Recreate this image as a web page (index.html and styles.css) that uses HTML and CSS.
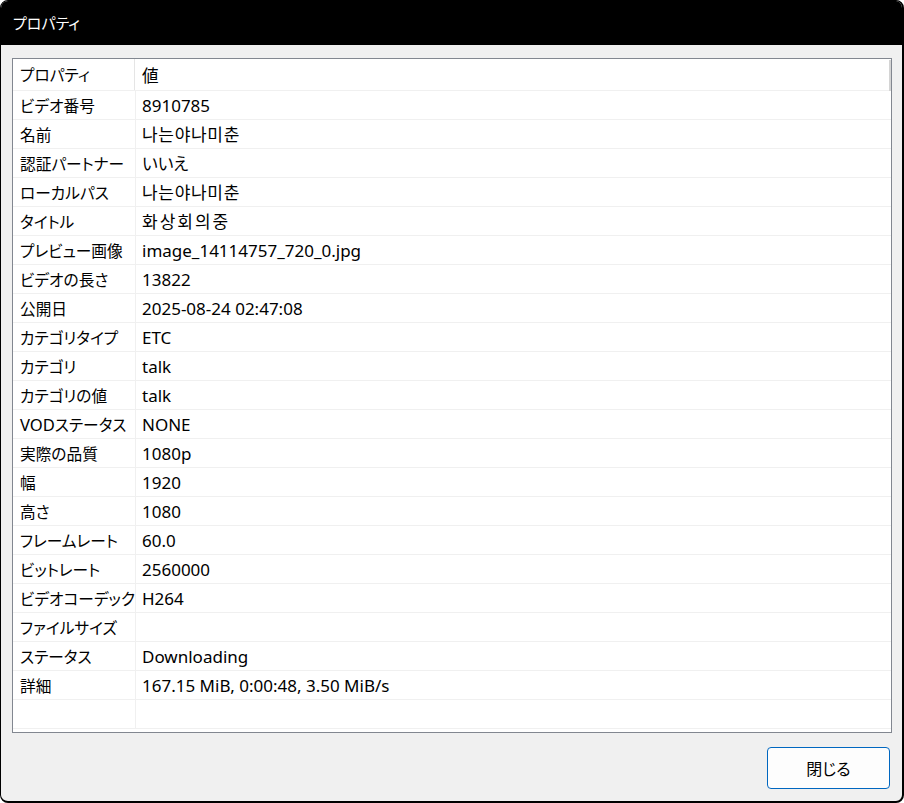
FILE: index.html
```html
<!DOCTYPE html>
<html lang="ja">
<head>
<meta charset="utf-8">
<title>プロパティ</title>
<link rel="stylesheet" href="styles.css">
</head>
<body>
<div class="window">
  <div class="titlebar">プロパティ</div>
  <div class="content">
    <div class="grid-panel">
      <div class="row header">
        <div class="cell key">プロパティ</div>
        <div class="cell val jp">値</div>
      </div>
      <div class="row"><div class="cell key">ビデオ番号</div><div class="cell val">8910785</div></div>
      <div class="row"><div class="cell key">名前</div><div class="cell val ko">나는야나미춘</div></div>
      <div class="row"><div class="cell key">認証パートナー</div><div class="cell val jp">いいえ</div></div>
      <div class="row"><div class="cell key">ローカルパス</div><div class="cell val ko">나는야나미춘</div></div>
      <div class="row"><div class="cell key">タイトル</div><div class="cell val ko wide">화상회의중</div></div>
      <div class="row"><div class="cell key">プレビュー画像</div><div class="cell val">image_14114757_720_0.jpg</div></div>
      <div class="row"><div class="cell key">ビデオの長さ</div><div class="cell val">13822</div></div>
      <div class="row"><div class="cell key">公開日</div><div class="cell val">2025-08-24 02:47:08</div></div>
      <div class="row"><div class="cell key">カテゴリタイプ</div><div class="cell val">ETC</div></div>
      <div class="row"><div class="cell key">カテゴリ</div><div class="cell val">talk</div></div>
      <div class="row"><div class="cell key">カテゴリの値</div><div class="cell val">talk</div></div>
      <div class="row"><div class="cell key"><span class="latin">VOD</span>ステータス</div><div class="cell val">NONE</div></div>
      <div class="row"><div class="cell key">実際の品質</div><div class="cell val">1080p</div></div>
      <div class="row"><div class="cell key">幅</div><div class="cell val">1920</div></div>
      <div class="row"><div class="cell key">高さ</div><div class="cell val">1080</div></div>
      <div class="row"><div class="cell key">フレームレート</div><div class="cell val">60.0</div></div>
      <div class="row"><div class="cell key">ビットレート</div><div class="cell val">2560000</div></div>
      <div class="row"><div class="cell key">ビデオコーデック</div><div class="cell val">H264</div></div>
      <div class="row"><div class="cell key">ファイルサイズ</div><div class="cell val"></div></div>
      <div class="row"><div class="cell key">ステータス</div><div class="cell val">Downloading</div></div>
      <div class="row"><div class="cell key">詳細</div><div class="cell val">167.15 MiB, 0:00:48, 3.50 MiB/s</div></div>
      <div class="row"><div class="cell key"></div><div class="cell val"></div></div>
      <div class="scroll-thumb"></div>
    </div>
    <div class="actions">
      <button class="btn">閉じる</button>
    </div>
  </div>
</div>
</body>
</html>
```

FILE: styles.css
```css
* { box-sizing: border-box; }
html, body {
  margin: 0;
  padding: 0;
  background: #ffffff;
}
body {
  font-family: "Noto Sans", "Noto Sans CJK JP", sans-serif;
  font-feature-settings: "palt";
  color: #000;
}
.window {
  width: 904px;
  height: 803px;
  background: #f0f0f0;
  border: 1px solid #000;
  border-right-width: 2px;
  border-bottom-width: 2px;
  border-radius: 8px;
  overflow: hidden;
  display: flex;
  flex-direction: column;
}
.titlebar {
  height: 44px;
  background: #000;
  color: #fff;
  font-size: 15px;
  line-height: 44px;
  padding-left: 12px;
  flex: none;
}
.content {
  flex: 1;
  display: flex;
  flex-direction: column;
  padding: 13px 11px 0 11px;
}
.grid-panel {
  position: relative;
  width: 880px;
  height: 675px;
  background: #fff;
  border: 1px solid #828790;
  overflow: hidden;
}
.row {
  display: flex;
  height: 29px;
  border-bottom: 1px solid #f0f0f0;
}
.row.header {
  height: 32px;
}
.cell {
  line-height: 30px;
  white-space: nowrap;
  overflow: hidden;
}
.key {
  width: 123px;
  padding-left: 7px;
  border-right: 1px solid #f0f0f0;
  flex: none;
  font-size: 15.7px;
}
.latin {
  font-size: 16.6px;
}
.val {
  flex: 1;
  padding-left: 6px;
  font-size: 17px;
}
.val.jp {
  font-size: 16.6px;
}
.val.ko {
  font-size: 17px;
  font-feature-settings: normal;
  letter-spacing: 0.7px;
}
.val.ko.wide {
  letter-spacing: 2px;
}
.header .cell {
  line-height: 33px;
}
.header .key {
  border-right: 1px solid #e5e5e5;
  width: 122px;
}
.header .val {
  padding-left: 7px;
}
.scroll-thumb {
  position: absolute;
  right: 0px;
  top: 1px;
  width: 2px;
  height: 31px;
  background: #d4d4d4;
}
.actions {
  display: flex;
  justify-content: flex-end;
  padding-top: 14px;
  padding-right: 1px;
}
.btn {
  width: 123px;
  height: 42px;
  background: #fdfdfd;
  border: 1px solid #0067c0;
  border-radius: 4px;
  font-family: "Noto Sans", "Noto Sans CJK JP", sans-serif;
  font-feature-settings: "palt";
  font-size: 16px;
  color: #000;
  padding: 0;
}
```
